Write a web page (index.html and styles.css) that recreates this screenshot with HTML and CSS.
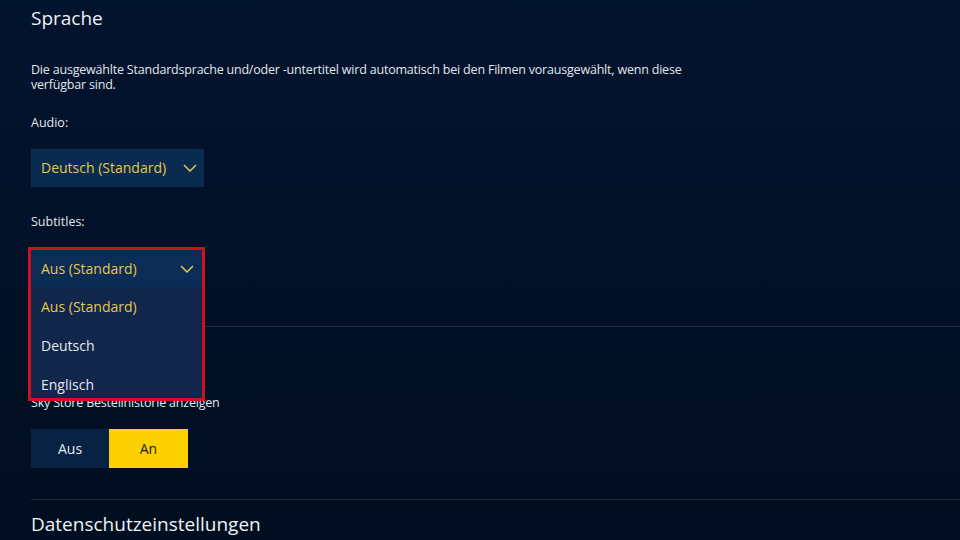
FILE: index.html
```html
<!DOCTYPE html>
<html lang="de">
<head>
<meta charset="utf-8">
<title>Einstellungen</title>
<link rel="stylesheet" href="styles.css">
</head>
<body>
<main class="page">
  <section class="section">
    <h2 class="heading">Sprache</h2>
    <p class="desc">Die ausgewählte Standardsprache und/oder -untertitel wird automatisch bei den Filmen vorausgewählt, wenn diese verfügbar sind.</p>
    <div class="label label-audio">Audio:</div>
    <div class="select select-audio">
      <span class="select-value">Deutsch (Standard)</span>
      <svg class="chev" viewBox="0 0 14 8" width="14" height="8"><path d="M1 1 L7 7 L13 1" fill="none" stroke="currentColor" stroke-width="1.5"/></svg>
    </div>
    <div class="label label-subs">Subtitles:</div>
    <div class="select-wrap">
      <div class="select select-subs">
        <span class="select-value">Aus (Standard)</span>
        <svg class="chev" viewBox="0 0 14 8" width="14" height="8"><path d="M1 1 L7 7 L13 1" fill="none" stroke="currentColor" stroke-width="1.5"/></svg>
      </div>
      <div class="dropdown">
        <div class="dd-head">
          <span class="select-value">Aus (Standard)</span>
          <svg class="chev" viewBox="0 0 14 8" width="14" height="8"><path d="M1 1 L7 7 L13 1" fill="none" stroke="currentColor" stroke-width="1.5"/></svg>
        </div>
        <ul class="dd-list">
          <li class="dd-item dd-active">Aus (Standard)</li>
          <li class="dd-item">Deutsch</li>
          <li class="dd-item">Englisch</li>
        </ul>
      </div>
    </div>
  </section>
  <hr class="divider divider-1">
  <section class="section">
    <p class="desc desc-store">Sky Store Bestellhistorie anzeigen</p>
    <div class="toggle">
      <span class="toggle-opt">Aus</span>
      <span class="toggle-opt toggle-on">An</span>
    </div>
  </section>
  <hr class="divider divider-2">
  <section class="section">
    <h2 class="heading heading-privacy">Datenschutzeinstellungen</h2>
  </section>
</main>
</body>
</html>
```
FILE: styles.css
```css
html, body {
  margin: 0;
  padding: 0;
  height: 100%;
}
body {
  background: linear-gradient(180deg, #03142f 0%, #021128 45%, #010e1f 100%);
  color: #e4e8ee;
  font-family: "Open Sans", "Noto Sans", sans-serif;
  overflow: hidden;
}
.page {
  padding: 6px 0 0 31px;
}
.section {
  display: flex;
  flex-direction: column;
  align-items: flex-start;
}
.heading {
  margin: 0;
  font-weight: 400;
  font-size: 19px;
  line-height: 24px;
  color: #eef1f5;
}
.desc {
  margin: 32px 0 0;
  width: 700px;
  font-size: 12.5px;
  line-height: 15px;
  letter-spacing: -0.2px;
  color: #e2e6ec;
}
.label {
  font-size: 12.5px;
  line-height: 16px;
  color: #e2e6ec;
}
.label-audio { margin-top: 23px; }
.label-subs { margin-top: 27px; }
.select {
  display: flex;
  align-items: center;
  justify-content: space-between;
  box-sizing: border-box;
  height: 38px;
  padding: 0 7px 0 10px;
  background: #0a2b50;
  color: #e6c64c;
}
.select-audio {
  margin-top: 18px;
  width: 173px;
}
.select-value {
  font-size: 14px;
  line-height: 18px;
}
.chev {
  display: block;
  color: #e6c64c;
}
.select-audio .select-value { margin-right: 13px; }
.select-wrap {
  position: relative;
  margin-top: 20px;
}
.select-subs {
  width: 171px;
}
.dropdown {
  position: absolute;
  top: -3px;
  left: -3px;
  width: 171px;
  height: 148px;
  overflow: hidden;
  border: 3px solid #d0111d;
  background: #10264a;
  z-index: 2;
}
.dd-head {
  display: flex;
  align-items: center;
  justify-content: space-between;
  height: 37px;
  padding: 0 8px 0 10px;
  background: #0b2c55;
  color: #e6c64c;
}
.dd-list {
  list-style: none;
  margin: 0;
  padding: 0;
}
.dd-item {
  display: flex;
  align-items: center;
  height: 39px;
  padding: 0 10px;
  font-size: 14px;
  color: #e4e8ee;
}
.dd-active {
  color: #e6c64c;
}
.divider {
  margin: 38px 0 0;
  border: 0;
  height: 1px;
  background: #1b2b40;
}
.divider-2 { margin-top: 31px; }
.desc-store {
  margin-top: 68px;
  width: auto;
  line-height: 16px;
}
.toggle {
  display: flex;
  margin-top: 18px;
}
.toggle-opt {
  display: flex;
  align-items: center;
  justify-content: center;
  width: 78px;
  height: 39px;
  font-size: 14px;
  background: #072243;
  color: #e4e8ee;
}
.toggle-on {
  width: 79px;
  background: #fdd000;
  color: #1c1c1c;
}
.heading-privacy { margin-top: 12px; }
```
